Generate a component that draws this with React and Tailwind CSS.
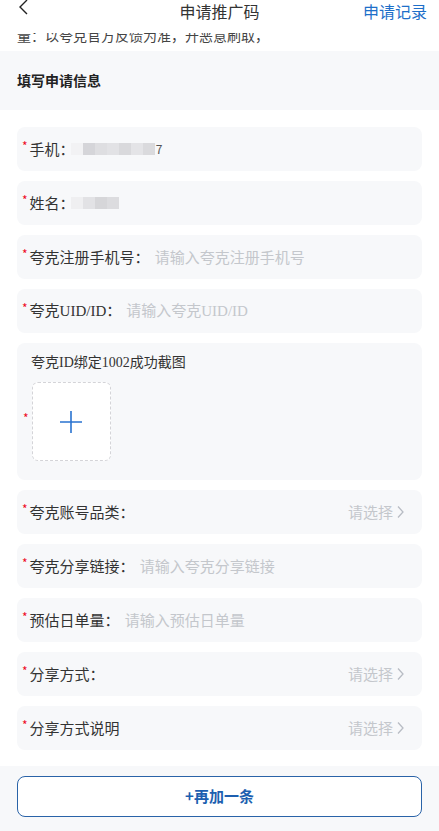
import React from "react";

const font = { fontFamily: '"Noto Sans CJK SC", "Noto Sans", sans-serif' };
const serifMix = { fontFamily: '"Liberation Serif", "Noto Sans CJK SC", serif' };

function Star() {
  return <span className="text-[#ee0a24] text-[12px] leading-none mr-[2px] -mt-[7px]">*</span>;
}

function Mosaic({ shades }) {
  return (
    <div className="flex items-center blur-[0.6px]">
      {shades.map((c, i) => (
        <div key={i} className="w-[12px] h-[12px]" style={{ background: c }} />
      ))}
    </div>
  );
}

function Arrow() {
  return (
    <svg width="9" height="14" viewBox="0 0 9 14" className="ml-[3px]">
      <path d="M2 1.5 L7 7 L2 12.5" fill="none" stroke="#b8bcc4" strokeWidth="1.3" />
    </svg>
  );
}

function Row({ label, placeholder, select, serif, children }) {
  return (
    <div className="mx-[17px] h-[44px] rounded-[8px] bg-[#f7f8fa] flex items-center pl-[5px] pr-[17px] text-[15px]">
      <Star />
      <span className="text-[#333]" style={serif ? serifMix : undefined}>{label}</span>
      {children}
      {placeholder && (
        <span className="ml-[5px] text-[#c4c7cc]" style={serif ? serifMix : undefined}>
          {placeholder}
        </span>
      )}
      {select && (
        <span className="ml-auto flex items-center text-[#c4c7cc]">
          请选择
          <Arrow />
        </span>
      )}
    </div>
  );
}

export default function App() {
  return (
    <div className="w-[439px] h-[831px] bg-white overflow-hidden" style={font}>
      <div className="h-[33px] relative flex items-start justify-center bg-white pt-[1px]">
        <svg width="12" height="16" viewBox="0 0 12 16" className="absolute left-[17px] top-[-1px]">
          <path d="M10 1 L3 8 L10 15" fill="none" stroke="#222" strokeWidth="1.4" />
        </svg>
        <span className="text-[16px] text-[#333] leading-[20px]">申请推广码</span>
        <span className="absolute right-[12px] top-[1px] text-[16px] text-[#1e6fc9] leading-[20px]">申请记录</span>
      </div>
      <div className="h-[18px] overflow-hidden">
        <p className="text-[14px] text-[#444] leading-[14px] -mt-[5px] pl-[17px] whitespace-nowrap">
          量：以夸克官方反馈为准，开恶意刷取，
        </p>
      </div>
      <div className="h-[59px] bg-[#f7f8fa] flex items-center pl-[17px]">
        <span className="text-[14px] font-bold text-[#222]">填写申请信息</span>
      </div>

      <div className="pt-[17px] flex flex-col gap-[10px]">
        <Row label="手机：">
          <div className="flex items-center -ml-[4px]">
            <Mosaic shades={["#f2f2f4", "#d5d5d9", "#dedee1", "#e2e2e5", "#d9d9dc", "#e4e4e7", "#dadadd"]} />
            <span className="text-[#555] text-[12px] ml-[1px]">7</span>
          </div>
        </Row>
        <Row label="姓名：">
          <div className="flex items-center -ml-[4px]">
            <Mosaic shades={["#efeff1", "#e2e2e5", "#d6d6d9", "#dcdcdf"]} />
            <span className="text-[#555] text-[11px] -ml-[6px]">ı</span>
          </div>
        </Row>
        <Row label="夸克注册手机号：" placeholder="请输入夸克注册手机号" />
        <Row label="夸克UID/ID：" placeholder="请输入夸克UID/ID" serif />

        <div className="mx-[17px] h-[137px] rounded-[8px] bg-[#f7f8fa] pl-[14px] pt-[10px] text-[14px]">
          <div className="text-[#333] leading-[20px]" style={serifMix}>夸克ID绑定1002成功截图</div>
          <div className="flex items-center mt-[9px] -ml-[8px]">
            <Star />
            <div className="ml-[1px] w-[79px] h-[79px] rounded-[6px] border border-dashed border-[#d4d4d8] bg-white flex items-center justify-center">
              <svg width="24" height="24" viewBox="0 0 24 24">
                <path d="M12 1 V23 M1 12 H23" stroke="#2a73d0" strokeWidth="1.6" />
              </svg>
            </div>
          </div>
        </div>

        <Row label="夸克账号品类：" select />
        <Row label="夸克分享链接：" placeholder="请输入夸克分享链接" />
        <Row label="预估日单量：" placeholder="请输入预估日单量" />
        <Row label="分享方式：" select />
        <Row label="分享方式说明" select />
      </div>

      <div className="mt-[16px] h-[70px] bg-[#f7f8fa] pt-[10px] px-[17px]">
        <button className="w-full h-[41px] rounded-[8px] border border-[#2a63a8] bg-white text-[15px] font-bold text-[#1d5fb0]">
          +再加一条
        </button>
      </div>
    </div>
  );
}
